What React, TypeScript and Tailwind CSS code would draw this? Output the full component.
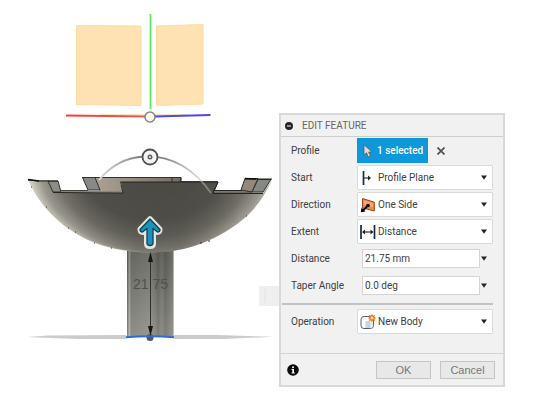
import type { ReactNode } from "react";

const rowClass = "flex h-[27px] items-center pl-[10px] pr-[10px]";
const labelClass = "w-[66px] shrink-0 text-[10px] text-[#404040]";

function Caret() {
  return (
    <svg viewBox="0 0 6 5" className="h-[5px] w-[6px] shrink-0" aria-hidden="true">
      <path d="M0 0.5H6L3 4.8Z" fill="#252525" />
    </svg>
  );
}

function StartIcon() {
  return (
    <svg viewBox="0 0 16 16" className="size-4 shrink-0" aria-hidden="true">
      <path d="M3.5 1V15" stroke="#14294d" strokeWidth="1.7" />
      <path d="M4 8H9" stroke="#333" strokeWidth="1.2" />
      <path d="M8 5.5L11 8L8 10.5Z" fill="#222" />
    </svg>
  );
}

function DirectionIcon() {
  return (
    <svg viewBox="0 0 16 16" className="size-4 shrink-0" aria-hidden="true">
      <path d="M2.5 1.5L14.3 5.2V14L2.5 10.8Z" fill="#f58a4b" stroke="#8a4521" strokeWidth="1" />
      <path d="M4 3.5L13 6.2V10L4 7.5Z" fill="#ffa66e" />
      <path d="M3 13.5L8 8.5" stroke="#080808" strokeWidth="1.8" />
      <path d="M.8 15.2L1.5 10.6L5.5 14.5Z" fill="#080808" />
      <circle cx="8" cy="8.5" r="1.8" fill="#080808" />
    </svg>
  );
}

function ExtentIcon() {
  return (
    <svg viewBox="0 0 16 16" className="size-4 shrink-0" aria-hidden="true">
      <path d="M1 1V15M14.5 1V15" stroke="#14294d" strokeWidth="1.7" />
      <path d="M4 8H11.5" stroke="#333" strokeWidth="1.2" />
      <path d="M5 5.5L2 8L5 10.5ZM10.5 5.5L13.5 8L10.5 10.5Z" fill="#222" />
    </svg>
  );
}

function BodyIcon() {
  return (
    <svg viewBox="0 0 16 16" className="size-4 shrink-0" aria-hidden="true">
      <path d="M4 2.5H10L13.5 5V11.5Q13.5 14.5 10.5 14.5H4Q1 14.5 1 11.5V5.5Q1 2.5 4 2.5Z" fill="#fff" stroke="#566170" strokeWidth="1" />
      <path d="M5.5 7H10V14H5.5Z" fill="#ccd2da" />
      <path d="M10 7L13 5.5V11Q13 14 10 14Z" fill="#e7eaee" />
      <path d="M12 0L13.1 1.5L15 1.1L14.6 3L16 4L14.6 5L15 6.9L13.1 6.5L12 8L10.9 6.5L9 6.9L9.4 5L8 4L9.4 3L9 1.1L10.9 1.5Z" fill="#f4791f" />
      <circle cx="12" cy="4" r="1.4" fill="#ffd9a4" />
    </svg>
  );
}

function SelectRow({ id, label, value, icon }: { id: string; label: string; value: string; icon: ReactNode }) {
  return (
    <div className={rowClass}>
      <label htmlFor={id} className={labelClass}>{label}</label>
      <div className="flex h-[25px] min-w-0 flex-1 items-center rounded-[1px] border border-[#dadada] bg-white pl-[2px] pr-[5px]">
        {icon}
        <select id={id} defaultValue={value} className="min-w-0 flex-1 appearance-none bg-transparent pl-[2px] text-[10px] text-[#404040] outline-none">
          <option>{value}</option>
        </select>
        <Caret />
      </div>
    </div>
  );
}

function InputRow({ id, label, value }: { id: string; label: string; value: string }) {
  return (
    <div className={rowClass}>
      <label htmlFor={id} className={labelClass}>{label}</label>
      <input id={id} defaultValue={value} className="ml-[5px] h-[19px] min-w-0 flex-1 border border-[#d4d4d4] bg-white px-[2px] text-[10px] text-[#404040] outline-none" />
      <button type="button" aria-label={`${label} options`} className="flex w-[13px] justify-start pl-[1px]"><Caret /></button>
    </div>
  );
}

function ModelView() {
  return (
    <svg viewBox="0 0 279 402" className="min-w-0 flex-1 self-start" role="img" aria-label="Bowl model">
      <defs>
        <radialGradient id="bowl" gradientUnits="userSpaceOnUse" cx="0" cy="0" r="1" gradientTransform="translate(153 168) scale(125 90)">
          <stop offset="0" stopColor="#484741" />
          <stop offset=".58" stopColor="#52514b" />
          <stop offset=".77" stopColor="#706e67" />
          <stop offset=".9" stopColor="#9a978e" />
          <stop offset="1" stopColor="#d8d5c9" />
        </radialGradient>
        <linearGradient id="shade" gradientUnits="userSpaceOnUse" x1="70" y1="0" x2="240" y2="0">
          <stop offset="0" stopColor="#4a4943" stopOpacity="0" />
          <stop offset=".4" stopColor="#4a4943" stopOpacity=".5" />
          <stop offset=".65" stopColor="#4a4943" stopOpacity=".5" />
          <stop offset="1" stopColor="#4a4943" stopOpacity="0" />
        </linearGradient>
        <linearGradient id="stem">
          <stop offset="0" stopColor="#55564f" />
          <stop offset=".05" stopColor="#b0b0a9" />
          <stop offset=".09" stopColor="#777973" />
          <stop offset=".48" stopColor="#858780" />
          <stop offset=".6" stopColor="#777973" />
          <stop offset=".67" stopColor="#63645e" />
          <stop offset=".75" stopColor="#7b7c75" />
          <stop offset=".82" stopColor="#63645e" />
          <stop offset="1" stopColor="#85857d" />
        </linearGradient>
        <linearGradient id="stemShade" x1="0" y1="0" x2="0" y2="1">
          <stop offset="0" stopColor="#33342f" stopOpacity=".3" />
          <stop offset="1" stopColor="#c2c3bc" stopOpacity=".3" />
        </linearGradient>
        <linearGradient id="tan">
          <stop offset="0" stopColor="#b5aa9b" />
          <stop offset="1" stopColor="#746d63" />
        </linearGradient>
        <linearGradient id="redAxis" gradientUnits="userSpaceOnUse" x1="66" y1="0" x2="146" y2="0">
          <stop offset="0" stopColor="#ff3838" />
          <stop offset="1" stopColor="#d96251" />
        </linearGradient>
        <linearGradient id="arc" gradientUnits="userSpaceOnUse" x1="99" y1="0" x2="211" y2="0">
          <stop offset="0" stopColor="#dcdcdc" />
          <stop offset=".4" stopColor="#777" />
          <stop offset=".6" stopColor="#888" />
          <stop offset="1" stopColor="#ccc" stopOpacity=".4" />
        </linearGradient>
      </defs>
      <path d="M76.500 25.500L141 26V105.500L76.500 104.500Z M156.500 26L203 24.500V104L156.500 105.500Z" fill="#fee2b4" stroke="#ffdc9e" strokeWidth="1" />
      <path d="M100 115H188" stroke="#f6cb88" strokeWidth="1" />
      <path d="M66 115.500L146 116.500" stroke="url(#redAxis)" strokeWidth="1.800" />
      <path d="M154 116.500L210.500 115" stroke="#4b48ed" strokeWidth="1.800" />
      <path d="M150.500 14V109" stroke="#5ced5c" strokeWidth="1.800" />
      <circle cx="150" cy="117" r="5" fill="#fff9ed" stroke="#858585" strokeWidth="1.5" />
      <path d="M259 286H279V306H259Z" fill="#efefef" />
      <path d="M264 289L266 291L264 293L266 295L264 297L266 299L264 301L266 303" fill="none" stroke="#dedede" strokeWidth=".7" />
      <path d="M27 337L48 335.500L126 335V339H78L37 337.500Z M174 335H218L273 336.800L223 339H174Z" fill="#cbcbcb" />
      <path d="M127 248H173.500V337H127Z" fill="url(#stem)" />
      <path d="M127 248H173.500V337H127Z" fill="url(#stemShade)" />
      <circle cx="150" cy="337.500" r="3.500" fill="#53575c" />
      <path d="M126 337.200Q150 335.500 174 337.200" fill="none" stroke="#326bd4" strokeWidth="2" />
      <path d="M28 180H49L53 192L123 193L121 181H218L213 193H263L272 180C265 195 257 207 247 216C235 227 219 237 200 244C184 250 170 252 150 252.500C131 252 113 250 95 243C83 238 76 234 69 229C53 218 38 202 28 180Z" fill="url(#bowl)" />
      <path d="M53 192H123L121 181H218L213 193H263C256 208 245 218 232 227C208 244 180 253 150 252.500C112 251 87 241 69 228C54 217 48 207 42 194Z" fill="url(#shade)" />
      <path d="M82 177.500H181V182H120L123 193H100L95 178Z" fill="url(#tan)" />
      <path d="M82.500 177.500H95L100 190H88Z" fill="#878a86" stroke="#302f2a" strokeWidth="1" />
      <path d="M48 181H58L61 192H53Z" fill="#8b8d86" stroke="#302f2a" strokeWidth="1" />
      <path d="M28 180L39 181H58M53 192.500L123 193L120.500 182H218L213 193.500H263" fill="none" stroke="#252521" strokeWidth="1" />
      <path d="M61 190.500H88" stroke="#45433b" strokeWidth="1" />
      <path d="M61 191.500H121" stroke="#8a867c" strokeWidth="1" />
      <path d="M82 177.500H181V182M172 178V182M181 178L180 182" fill="none" stroke="#333129" strokeWidth="1" />
      <path d="M214 191L241 190L245 178.500H258L252 193H214Z" fill="#81796e" />
      <path d="M245 178.500H258L252 192L241 190Z" fill="#91887b" stroke="#302f2a" strokeWidth="1" />
      <path d="M258 179.500H271L263 192H252Z" fill="#858984" stroke="#302f2a" strokeWidth="1" />
      <path d="M218 182L213 193M213 190.500H242M245 179H272M213 193.300H263" stroke="#252521" strokeWidth="1" />
      <path d="M28 179.500L39 181M245 178.500L256 179" stroke="#111" strokeWidth="1.500" />
      <path d="M31 187h1M46 207h1M68 228h1M75 232h1M94 243h1M111 248h1M246 216h1M200 243h2M208 241h2" stroke="#35342f" strokeWidth="1" />
      <path d="M99 180Q117 158 144 156.500Q184 155 211 193" fill="none" stroke="url(#arc)" strokeWidth="1.800" />
      <circle cx="150" cy="157" r="7.500" fill="#f3f3f3" stroke="#505050" strokeWidth="1.800" />
      <circle cx="150" cy="157" r="1.800" fill="#ddd" stroke="#606060" strokeWidth="1.400" />
      <path d="M150.500 254V333" stroke="#30312f" strokeWidth="1" />
      <path d="M148 262L150.500 252L153 262ZM148 326L150.500 336L153 326Z" fill="#161715" />
      <text x="133" y="289" fontFamily="Liberation Sans, Arial, sans-serif" fontSize="14" fill="#50514c">21.75</text>
      <path d="M150 218L160.500 229Q161 233 157 233L154 230V244Q154 247 150 247Q146 247 146 244V230L143 233Q139 233 139.500 229Z" fill="none" stroke="#e4e5e2" strokeWidth="4" strokeLinejoin="round" />
      <path d="M150 219L160 229.500Q160 232 157.500 232L153 228.500V243Q153 245.500 150 245.500Q147 245.500 147 243V228.500L142.500 232Q140 232 140 229.500Z" fill="#1794bd" stroke="#173e4b" strokeWidth="1.300" strokeLinejoin="round" />
    </svg>
  );
}

export default function App() {
  return (
    <main className="flex items-start overflow-hidden bg-white font-['Roboto','Liberation_Sans',sans-serif]">
      <ModelView />
      <form className="mr-[33px] mt-[113px] w-[226px] shrink-0 border-2 border-[#d9d9d9] bg-[#f1f1f1]" onSubmit={(event) => event.preventDefault()}>
        <header className="flex h-[22px] items-center border-b border-[#cecece] pl-1">
          <button type="button" aria-label="Collapse panel" className="mr-[9px]">
            <svg viewBox="0 0 8 8" className="size-2" aria-hidden="true">
              <circle cx="4" cy="4" r="4" fill="#252525" />
              <path d="M2 4H6" stroke="#fff" strokeWidth="1" />
            </svg>
          </button>
          <h1 className="text-[10px] text-[#666]">EDIT FEATURE</h1>
        </header>

        <div className={rowClass}>
          <span className={labelClass}>Profile</span>
          <button type="button" className="flex h-[25px] w-[71px] items-center bg-[#0c98db] pl-[6px] text-[10px] font-medium text-white">
            <svg viewBox="0 0 10 14" className="mr-[4px] h-[14px] w-[10px] shrink-0" aria-hidden="true">
              <path d="M1 .8V11L3.500 8.800L5.300 13L7.500 12L5.600 8H9Z" fill="#ddd" stroke="#565b60" strokeWidth=".8" />
            </svg>
            1 selected
          </button>
          <button type="button" aria-label="Clear profile selection" className="ml-[9px]">
            <svg viewBox="0 0 8 8" className="size-2" aria-hidden="true"><path d="M.5 .5L7.500 7.500M7.500 .5L.5 7.500" stroke="#505050" strokeWidth="1.700" /></svg>
          </button>
        </div>
        <SelectRow id="start" label="Start" value="Profile Plane" icon={<StartIcon />} />
        <SelectRow id="direction" label="Direction" value="One Side" icon={<DirectionIcon />} />
        <SelectRow id="extent" label="Extent" value="Distance" icon={<ExtentIcon />} />
        <InputRow id="distance" label="Distance" value="21.75 mm" />
        <InputRow id="taper" label="Taper Angle" value="0.0 deg" />
        <hr className="mb-[3px] ml-px mr-[10px] mt-1 border-t-2 border-[#c2c2c2]" />
        <SelectRow id="operation" label="Operation" value="New Body" icon={<BodyIcon />} />
        <footer className="mt-[18px] flex h-[32px] items-center gap-[9px] border-t border-[#d2d2d2] pl-[6px] pr-[8px]">
          <button type="button" aria-label="Information" className="mr-auto">
            <svg viewBox="0 0 12 12" className="size-3" aria-hidden="true">
              <circle cx="6" cy="6" r="5.800" fill="#080808" />
              <path d="M4.500 5H7V9.500H4.500V8.500H5.300V6H4.500ZM7 8.500H7.700V9.500H7Z" fill="#fff" />
              <circle cx="6" cy="3.200" r="1" fill="#fff" />
            </svg>
          </button>
          <button type="submit" className="h-[18px] w-[55px] border border-[#c5c5c5] bg-[#e8e8e8] font-['Liberation_Sans',Arial,sans-serif] text-[11px] leading-4 text-[#777]">OK</button>
          <button type="button" className="h-[18px] w-[55px] border border-[#c5c5c5] bg-[#e8e8e8] font-['Liberation_Sans',Arial,sans-serif] text-[11px] leading-4 text-[#777]">Cancel</button>
        </footer>
      </form>
    </main>
  );
}
